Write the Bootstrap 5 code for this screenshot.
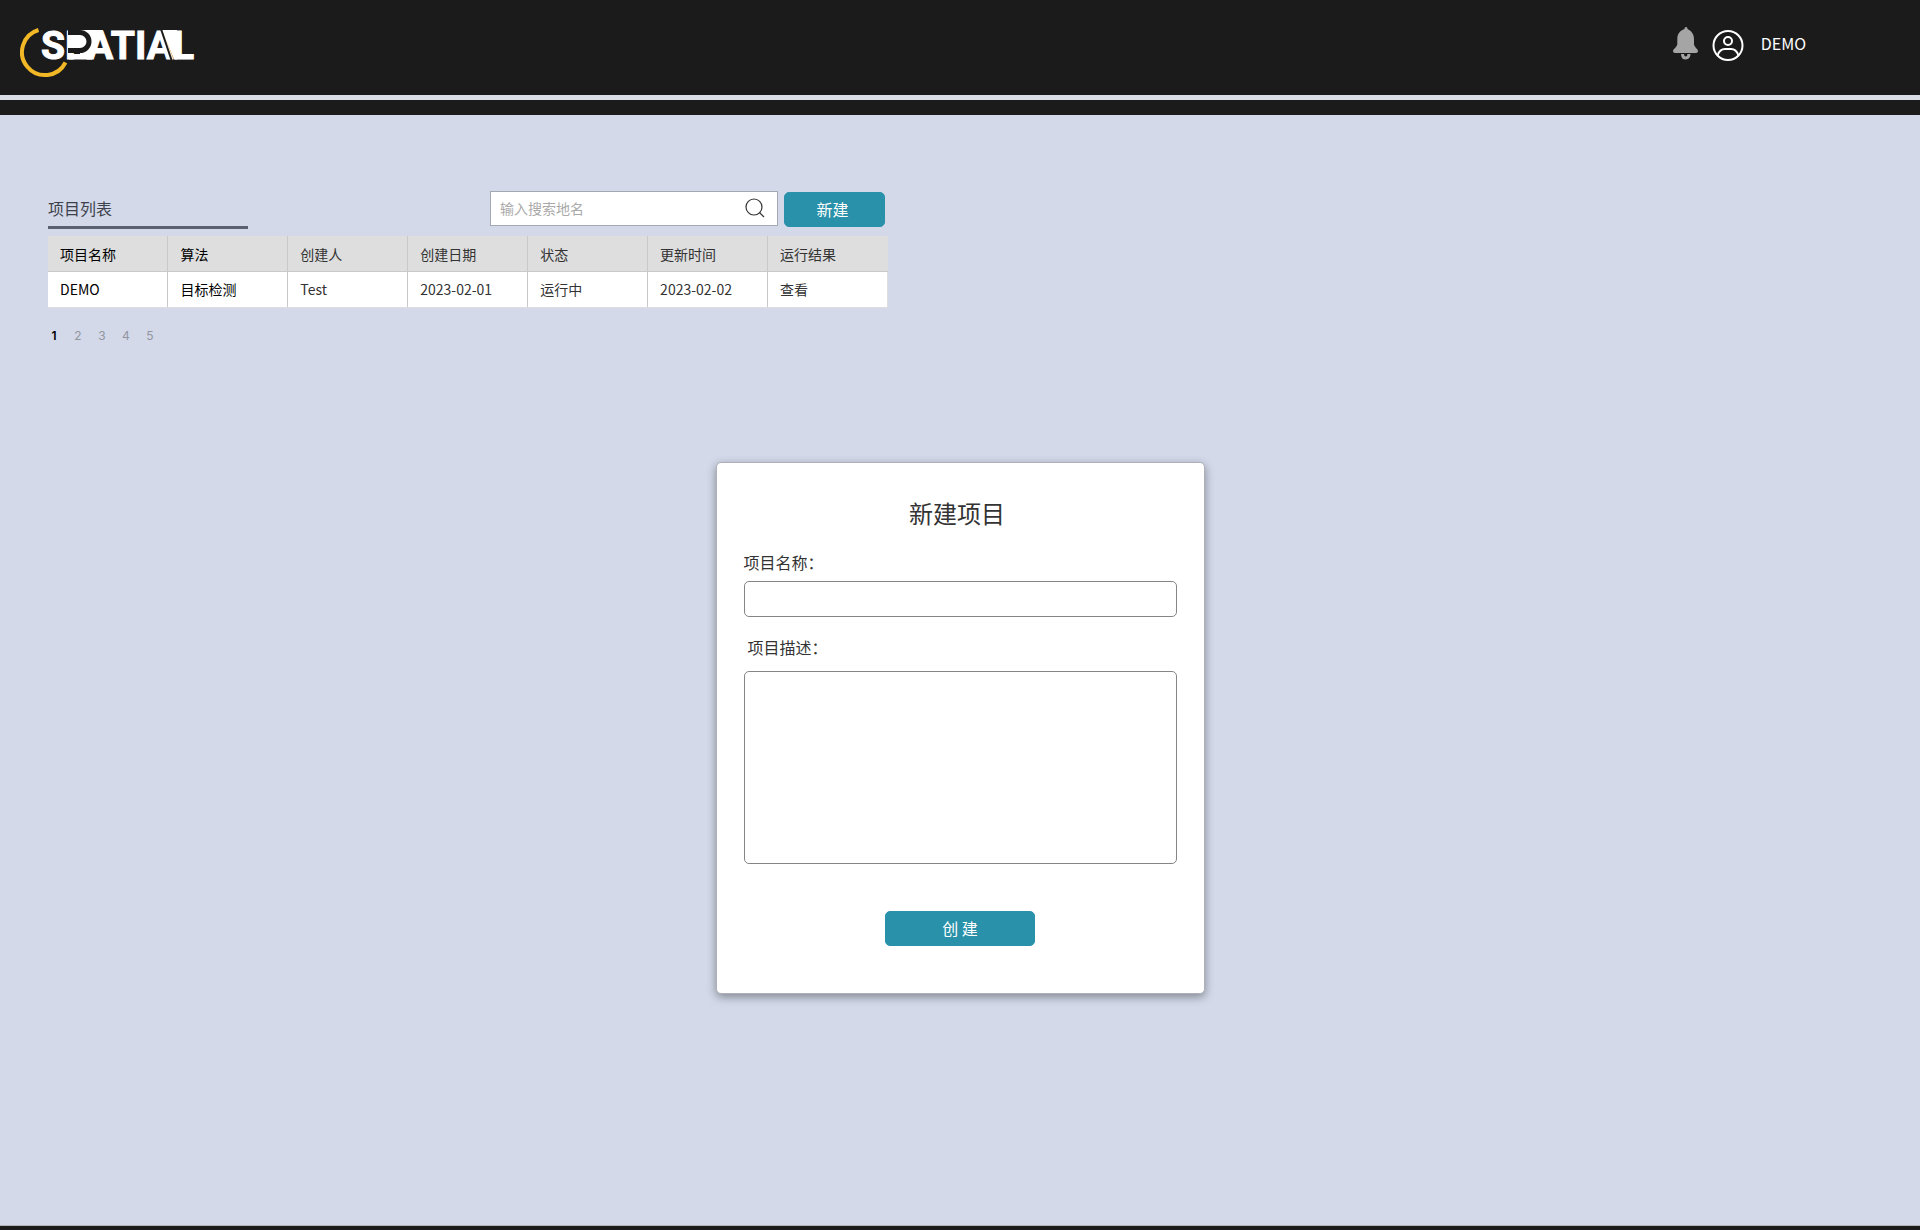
<!DOCTYPE html>
<html lang="zh-CN">
<head>
<meta charset="utf-8">
<meta name="viewport" content="width=device-width, initial-scale=1">
<title>SPATIAL</title>
<link href="https://cdn.jsdelivr.net/npm/bootstrap@5.3.0/dist/css/bootstrap.min.css" rel="stylesheet">
<style>
body { background: #d3d9e9; color: #333; font-family: "Noto Sans CJK SC", sans-serif; font-size: 14px; line-height: 20px; }
.site-header { background: #1b1b1b; height: 95px; padding: 20px 114px 0 20px; }
.brand-word { font: 700 39px Roboto, sans-serif; fill: #fff; stroke: #fff; stroke-width: 1px; }
.account { height: 50px; font-size: 16px; }
.account a { color: #fff; }
.bell-link { margin-right: 12px; }
.user-name { padding: 13px 0 0 16px; line-height: 20px; }
.sub-bar { background: #1b1b1b; height: 15px; margin-top: 5px; }
.strip-gap { background: #dbdde6; }
.foot-bar { background: #1b1b1b; height: 5px; border-top: 1px solid #b4b3b8; }
.projects { max-width: 840px; margin-left: 48px; margin-top: 76px; }
.list-title { width: 200px; height: 38px; font-size: 16px; line-height: 34px; border-bottom: 3px solid #5c5f6d; color: #3d414b; }
.list-tools { gap: 6px; padding-right: 3px; height: 36px; }
.search-box { width: 288px; height: 35px; background: #fff; border: 1px solid #a3a8b1; padding: 0 12px 1px 9px; }
.search-box input { font-size: 14px; }
.search-box input::placeholder { color: #aaa; opacity: 1; }
.btn-teal { --bs-btn-bg: #2991a9; --bs-btn-color: #fff; --bs-btn-border-color: #2991a9; --bs-btn-hover-bg: #217a8f; --bs-btn-hover-color: #fff; --bs-btn-border-radius: 5px; --bs-btn-font-size: 16px; --bs-btn-line-height: 24px; height: 35px; padding: 4px 6px 5px; }
.btn-new { width: 101px; padding-right: 10px; }
.btn-create { width: 150px; }
.project-table { table-layout: fixed; margin: 7px 0 0; --bs-table-bg: #fff; }
.project-table th, .project-table td { height: 36px; padding: 7px 11px 8px 12px; font-weight: 400; color: #333; border: 0 solid #c9c9c9; border-right-width: 1px; }
.project-table tbody td { border-bottom: 1px solid #dcdde1; }
.project-table th:last-child, .project-table td:last-child { border-right-color: #dedede; }
.project-table thead th { height: 35px; padding-bottom: 7px; background: #dedede; border-bottom-width: 1px; }
.project-table th:nth-child(-n+2), .project-table td:nth-child(-n+2) { color: #000; }
.project-table a { color: #333; text-decoration: none; }
.pages { margin-top: 18px; font: 12px/20px Inter, sans-serif; }
.pages a { width: 12px; color: #91959f; text-decoration: none; text-align: center; display: block; }
.pages .active a { color: #000; font-weight: 600; }
.create-card { max-width: 489px; margin-top: 116px; padding: 30px 27px 47px; border: 1px solid #adb0b8; border-radius: 5px; box-shadow: 0 3px 10px rgba(0,0,0,.38); color: #333; }
.create-card h1 { font-size: 24px; line-height: 40px; font-weight: 400; padding-right: 6px; margin-bottom: 17px; color: #333; }
.create-card label { font-size: 16px; line-height: 24px; }
.create-card .form-control { border: 1px solid #858585; border-radius: 5px; }
.name-field { height: 36px; margin: 7px 0 18px; }
.desc-field { height: 193px; margin: 12px 0 47px; resize: none; }
</style>
<script defer src="https://cdn.jsdelivr.net/npm/bootstrap@5.3.0/dist/js/bootstrap.bundle.min.js"></script>
</head>
<body class="d-flex flex-column min-vh-100">
<div class="strip-gap">
<header class="site-header d-flex justify-content-between align-items-start">
  <a href="#" aria-label="SPATIAL">
    <svg class="d-block" width="180" height="60" viewBox="20 20 180 60">
      <path d="M38.500 30A23 23 0 1 0 65.500 62.500" fill="none" stroke="#f2b825" stroke-width="4"/>
      <text class="brand-word" x="41" y="59">SPATIAL</text>
      <path d="M81 30H103L92 59.500H69V54H80Z" fill="#fff"/>
      <path d="M68 32.500H80A9 9 0 0 1 80 50.500H68" fill="#fff" stroke="#1b1b1b" stroke-width="5"/>
      <path d="M162 30H177V59.500H174Z" fill="#fff"/>
      <path d="M161 29L171.500 60" stroke="#1b1b1b" stroke-width="2"/>
    </svg>
  </a>
  <nav class="account d-flex align-items-start">
    <a href="#" class="bell-link" aria-label="通知">
      <svg class="d-block" width="26" height="40" viewBox="0 0 26 40"><path d="M13 7C12 7 11.500 7.700 11.500 9C7 10.500 4.300 14 4.300 19V24C4.300 27 0 29 0 31Q0 33 2 33H23Q25 33 25 31C25 29 21 27 21 24V19C21 14 18 10.500 14.500 9C14.500 7.700 14 7 13 7Z" fill="#a5a5a5"/><path d="M9.500 34Q9.500 38 12.700 38T16 34" fill="none" stroke="#a5a5a5" stroke-width="3"/></svg>
    </a>
    <a href="#" class="d-flex text-decoration-none">
      <svg class="d-block" width="34" height="50" viewBox="0 0 34 50" fill="none" stroke="#fff" stroke-width="2"><circle cx="17" cy="25.500" r="14.500"/><circle cx="17" cy="21" r="4"/><path d="M6.500 35.500C8 31 11 29 14 29H20C23 29 26 31 27.500 35.500"/></svg>
      <span class="user-name">DEMO</span>
    </a>
  </nav>
</header>
<div class="sub-bar"></div>
</div>
<main class="flex-grow-1">
  <section class="projects">
    <div class="d-flex justify-content-between align-items-start">
      <div class="list-title">项目列表</div>
      <div class="list-tools d-flex align-items-end">
        <div class="search-box d-flex align-items-center align-self-start">
          <input class="form-control border-0 p-0 shadow-none" type="text" placeholder="输入搜索地名" aria-label="输入搜索地名">
          <button class="btn p-0 border-0" type="button" aria-label="搜索"><svg class="d-block" width="20" height="20" viewBox="0 0 20 20" fill="none" stroke="#333" stroke-width="1.200"><circle cx="9" cy="9" r="8"/><path d="M14.500 14.500L19 19"/></svg></button>
        </div>
        <button class="btn btn-teal btn-new" type="button">新建</button>
      </div>
    </div>
    <table class="table project-table">
      <thead><tr><th scope="col">项目名称</th><th scope="col">算法</th><th scope="col">创建人</th><th scope="col">创建日期</th><th scope="col">状态</th><th scope="col">更新时间</th><th scope="col">运行结果</th></tr></thead>
      <tbody><tr><td>DEMO</td><td>目标检测</td><td>Test</td><td>2023-02-01</td><td>运行中</td><td>2023-02-02</td><td><a href="#">查看</a></td></tr></tbody>
    </table>
    <nav aria-label="分页">
      <ul class="pages list-unstyled d-flex mb-0">
        <li class="active me-2 pe-1"><a href="#" aria-current="page">1</a></li>
        <li class="me-2 pe-1"><a href="#">2</a></li>
        <li class="me-2 pe-1"><a href="#">3</a></li>
        <li class="me-2 pe-1"><a href="#">4</a></li>
        <li><a href="#">5</a></li>
      </ul>
    </nav>
  </section>
  <form class="card create-card mx-auto">
    <h1 class="text-center">新建项目</h1>
    <label for="pname">项目名称：</label>
    <input id="pname" class="form-control name-field" type="text">
    <label for="pdesc" class="ps-1">项目描述：</label>
    <textarea id="pdesc" class="form-control desc-field"></textarea>
    <button class="btn btn-teal btn-create align-self-center" type="button">创 建</button>
  </form>
</main>
<footer class="foot-bar"></footer>
</body>
</html>
